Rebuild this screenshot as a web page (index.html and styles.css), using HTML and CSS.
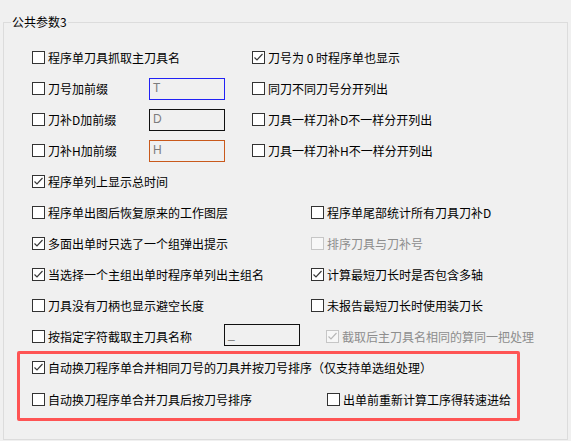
FILE: index.html
```html
<!DOCTYPE html>
<html lang="zh-CN">
<head>
<meta charset="utf-8">
<title>公共参数3</title>
<link rel="stylesheet" href="styles.css">
</head>
<body>
<div class="group">
  <span class="legend">公共参数3</span>

  <div class="row">
    <div class="cell col-a"><label class="cb"><span class="box"></span><span>程序单刀具抓取主刀具名</span></label></div>
    <div class="cell"><label class="cb"><span class="box"><svg viewBox="0 0 11 11"><polyline points="1.5,5.5 4,8 9.5,2"/></svg></span><span>刀号为 0 时程序单也显示</span></label></div>
  </div>

  <div class="row">
    <div class="cell col-a"><label class="cb lbl-a"><span class="box"></span><span>刀号加前缀</span></label><span class="edit e-blue">T</span></div>
    <div class="cell"><label class="cb"><span class="box"></span><span>同刀不同刀号分开列出</span></label></div>
  </div>

  <div class="row">
    <div class="cell col-a"><label class="cb lbl-a"><span class="box"></span><span>刀补D加前缀</span></label><span class="edit e-black">D</span></div>
    <div class="cell"><label class="cb"><span class="box"></span><span>刀具一样刀补D不一样分开列出</span></label></div>
  </div>

  <div class="row">
    <div class="cell col-a"><label class="cb lbl-a"><span class="box"></span><span>刀补H加前缀</span></label><span class="edit e-orange">H</span></div>
    <div class="cell"><label class="cb"><span class="box"></span><span>刀具一样刀补H不一样分开列出</span></label></div>
  </div>

  <div class="row">
    <div class="cell"><label class="cb"><span class="box"><svg viewBox="0 0 11 11"><polyline points="1.5,5.5 4,8 9.5,2"/></svg></span><span>程序单列上显示总时间</span></label></div>
  </div>

  <div class="row">
    <div class="cell col-b"><label class="cb"><span class="box"></span><span>程序单出图后恢复原来的工作图层</span></label></div>
    <div class="cell"><label class="cb"><span class="box"></span><span>程序单尾部统计所有刀具刀补D</span></label></div>
  </div>

  <div class="row">
    <div class="cell col-b"><label class="cb"><span class="box"><svg viewBox="0 0 11 11"><polyline points="1.5,5.5 4,8 9.5,2"/></svg></span><span>多面出单时只选了一个组弹出提示</span></label></div>
    <div class="cell"><label class="cb dis"><span class="box"></span><span>排序刀具与刀补号</span></label></div>
  </div>

  <div class="row">
    <div class="cell col-b"><label class="cb"><span class="box"><svg viewBox="0 0 11 11"><polyline points="1.5,5.5 4,8 9.5,2"/></svg></span><span>当选择一个主组出单时程序单列出主组名</span></label></div>
    <div class="cell"><label class="cb"><span class="box"><svg viewBox="0 0 11 11"><polyline points="1.5,5.5 4,8 9.5,2"/></svg></span><span>计算最短刀长时是否包含多轴</span></label></div>
  </div>

  <div class="row">
    <div class="cell col-b"><label class="cb"><span class="box"></span><span>刀具没有刀柄也显示避空长度</span></label></div>
    <div class="cell"><label class="cb"><span class="box"></span><span>未报告最短刀长时使用装刀长</span></label></div>
  </div>

  <div class="row">
    <div class="cell col-b"><label class="cb lbl-b"><span class="box"></span><span>按指定字符截取主刀具名称</span></label><span class="edit e-black e-up">_</span></div>
    <div class="cell indent"><label class="cb dis"><span class="box"><svg viewBox="0 0 11 11"><polyline points="1.5,5.5 4,8 9.5,2"/></svg></span><span>截取后主刀具名相同的算同一把处理</span></label></div>
  </div>

  <div class="red">
    <div class="row">
      <div class="cell"><label class="cb"><span class="box"><svg viewBox="0 0 11 11"><polyline points="1.5,5.5 4,8 9.5,2"/></svg></span><span>自动换刀程序单合并相同刀号的刀具并按刀号排序（仅支持单选组处理）</span></label></div>
    </div>
    <div class="row">
      <div class="cell col-c"><label class="cb"><span class="box"></span><span>自动换刀程序单合并刀具后按刀号排序</span></label></div>
      <div class="cell"><label class="cb"><span class="box"></span><span>出单前重新计算工序得转速进给</span></label></div>
    </div>
  </div>
</div>
</body>
</html>
```

FILE: styles.css
```css
* {
  box-sizing: border-box;
}

body {
  margin: 0;
  background: #f0f0f0;
  font-family: "Noto Sans CJK SC", "Liberation Sans", sans-serif;
  font-size: 12px;
  color: #000;
  text-spacing-trim: space-all;
}

.group {
  position: relative;
  margin: 22px 0 0 3px;
  width: 565px;
  height: 418px;
  border: 1px solid #dcdcdc;
  padding-top: 19px;
}

.legend {
  position: absolute;
  top: -9px;
  left: 7px;
  padding: 0 1px;
  background: #f0f0f0;
  line-height: 16px;
}

.row {
  display: flex;
  align-items: center;
  height: 31px;
  padding-left: 28px;
}

.cell {
  display: flex;
  align-items: center;
  flex: none;
}

.col-a { width: 220px; }
.col-b { width: 279px; }
.col-c { width: 295px; }

.indent { padding-left: 15px; }

.lbl-a { width: 117px; }
.lbl-b { width: 192px; }

.cb {
  display: flex;
  align-items: center;
  white-space: nowrap;
}

.box {
  width: 13px;
  height: 13px;
  border: 1px solid #333;
  background: #fff;
  margin-right: 3px;
  flex: none;
  display: flex;
  align-items: center;
  justify-content: center;
}

.box svg {
  width: 11px;
  height: 11px;
  display: block;
}

.box polyline {
  fill: none;
  stroke: #3a3a3a;
  stroke-width: 1.2;
}

.dis {
  color: #8d8d8d;
}

.dis .box {
  border-color: #c6c6c6;
  background: #f7f7f7;
}

.dis .box polyline {
  stroke: #b8b8b8;
}

.edit {
  width: 76px;
  height: 22px;
  border: 1px solid #000;
  padding: 0 0 2px 3px;
  color: #7c7c7c;
  font-family: "Liberation Sans", sans-serif;
  font-size: 12px;
  line-height: 18px;
  flex: none;
}

.e-blue { border-color: #2222f5; }
.e-black { border-color: #101010; }
.e-orange { border-color: #c9591c; }
.e-up { margin-bottom: 3px; }

.red {
  margin: -1px 0 0 13px;
  width: 503px;
  height: 70px;
  border: 3px solid #fe5454;
  border-radius: 2px;
  padding-top: 3px;
  display: flex;
  flex-direction: column;
  gap: 12px;
}

.red .row {
  height: 20px;
  padding-left: 12px;
}
```
